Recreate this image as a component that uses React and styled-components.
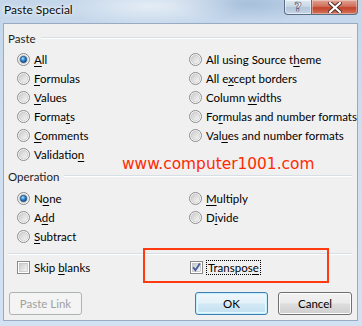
import React, { useId } from 'react';
import styled, { createGlobalStyle, css } from 'styled-components';

const uiFont = `Lato, "Noto Sans", "Liberation Sans", sans-serif`;

const GlobalStyle = createGlobalStyle`
  html, body {
    margin: 0;
    padding: 0;
    background: #fff;
  }
  body {
    font-family: ${uiFont};
    font-size: 11.5px;
    color: #000;
  }
`;

const Window = styled.div`
  position: relative;
  width: 362px;
  height: 326px;
  box-sizing: border-box;
  display: flex;
  flex-direction: column;
  overflow: hidden;
  background:
    radial-gradient(ellipse 90px 20px at 150px 6px, rgba(255,255,255,0.55), rgba(255,255,255,0) 100%),
    radial-gradient(ellipse 80px 18px at 250px 4px, rgba(140,170,205,0.5), rgba(140,170,205,0) 100%),
    linear-gradient(180deg, #c3d6ea 0%, #cfdff0 40%, #d3e2f2 100%);
`;

const TitleBar = styled.div`
  height: 23px;
  flex: none;
  display: flex;
  justify-content: space-between;
  align-items: flex-start;
  padding-left: 4px;
`;

const Title = styled.div`
  font-family: ${uiFont};
  font-size: 12px;
  line-height: 16px;
  padding-top: 2px;
  color: #0b0b0b;
  text-shadow: 0 0 6px #fff, 0 0 3px #fff;
`;

const CaptionButtons = styled.div`
  display: flex;
  margin-right: 4px;
`;

const CaptionButton = styled.div`
  height: 15px;
  box-sizing: border-box;
  display: flex;
  align-items: center;
  justify-content: center;
  border: 1px solid #5a6e86;
  border-top: none;
  ${p => p.$close ? css`
    width: 46px;
    border-left: none;
    border-radius: 0 0 4px 0;
    background: linear-gradient(180deg, #e0a394 0%, #d2705c 45%, #c2432a 55%, #d5735c 100%);
    box-shadow: inset 0 0 0 1px rgba(255,255,255,0.35);
  ` : css`
    width: 28px;
    border-radius: 0 0 0 4px;
    background: linear-gradient(180deg, #dfe8f2 0%, #c9d7e6 45%, #b3c5da 55%, #c6d6e7 100%);
    box-shadow: inset 0 0 0 1px rgba(255,255,255,0.5);
  `}
`;

const HelpGlyph = styled.span`
  font-family: "DejaVu Sans", sans-serif;
  font-weight: bold;
  font-size: 13px;
  line-height: 13px;
  color: #fff;
  -webkit-text-stroke: 0.6px #3e4f66;
  margin-top: -1px;
`;

const Body = styled.div`
  position: relative;
  flex: 1;
  margin: 0 4px 5px 3px;
  border: 1px solid #98abc2;
  background: #f0f0f0;
  padding: 6px 5px 4px 4px;
  display: flex;
  flex-direction: column;
`;

const GroupHeader = styled.div`
  display: flex;
  align-items: center;
  height: 16px;
  gap: 5px;
  margin-top: ${p => p.$top || 0}px;
  font-family: ${uiFont};
  font-size: 11.5px;
  color: #1e1e1e;
`;

const HeaderLine = styled.div`
  flex: 1;
  height: 0;
  border-top: 1px solid #d5dfe5;
  border-bottom: 1px solid #fff;
`;

const OptionGrid = styled.div`
  display: grid;
  grid-template-columns: 172px 1fr;
  grid-auto-flow: column;
  grid-template-rows: repeat(${p => p.$rows}, 19px);
  padding-left: 9px;
  margin-top: ${p => p.$top || 0}px;
`;

const Option = styled.label`
  display: flex;
  align-items: center;
  gap: 4px;
  height: 19px;
  font-family: ${uiFont};
  font-size: 11.5px;
  color: #000;
  white-space: nowrap;
`;

const Key = styled.span`
  text-decoration: underline;
  text-underline-offset: 2px;
  text-decoration-thickness: 1px;
`;

const Divider = styled.div`
  margin-top: 7px;
  border-top: 1px solid #d5dfe5;
  border-bottom: 1px solid #fff;
`;

const CheckRow = styled.div`
  display: grid;
  grid-template-columns: 173px 1fr;
  padding-left: 9px;
  margin-top: 3px;
  height: 19px;
`;

const FocusText = styled.span`
  outline: 1px dotted #000;
  outline-offset: 0px;
  padding: 0 1px;
`;

const ButtonRow = styled.div`
  display: flex;
  align-items: center;
  margin-top: 15px;
  padding-left: 1px;
  gap: 10px;
`;

const Spacer = styled.div`
  flex: 1;
`;

const Button = styled.button`
  width: ${p => p.$w || 73}px;
  height: 23px;
  box-sizing: border-box;
  padding: 0;
  font-family: ${uiFont};
  font-size: 11.5px;
  color: #000;
  border: 1px solid #707070;
  border-radius: 3px;
  background: linear-gradient(180deg, #f2f2f2 0%, #ebebeb 48%, #dddddd 52%, #cfcfcf 100%);
  box-shadow: inset 0 0 0 1px #fcfcfc;
  ${p => p.$default && css`
    border-color: #3c7fb1;
    box-shadow: inset 0 0 0 1px #c7eefb, inset 0 0 0 2px #e6f7fd;
    background: linear-gradient(180deg, #f0f7fb 0%, #e3f1f9 48%, #d2e8f5 52%, #c4e0f1 100%);
  `}
  ${p => p.disabled && css`
    border-color: #adb2b5;
    background: #f4f4f4;
    color: #a0a0a0;
    box-shadow: none;
  `}
`;

const Watermark = styled.div`
  position: absolute;
  left: 118px;
  top: 131px;
  font-family: "DejaVu Sans", Verdana, sans-serif;
  font-size: 15.4px;
  line-height: 18px;
  color: #ff2a00;
  white-space: nowrap;
`;

const Highlight = styled.div`
  position: absolute;
  left: 139px;
  top: 224px;
  width: 186px;
  height: 35px;
  box-sizing: border-box;
  border: 2px solid #ff3a10;
  pointer-events: none;
`;

const Radio = ({ checked }) => {
  const id = useId().replace(/:/g, '');
  return (
    <svg width="13" height="13" viewBox="0 0 13 13" style={{ flex: 'none' }}>
      <defs>
        <linearGradient id={`ro${id}`} x1="0" y1="0" x2="1" y2="1">
          <stop offset="0" stopColor="#f4f4f4" />
          <stop offset="1" stopColor="#ffffff" />
        </linearGradient>
        <linearGradient id={`ri${id}`} x1="0" y1="0" x2="1" y2="1">
          <stop offset="0" stopColor="#cbcbcb" />
          <stop offset="1" stopColor="#f8f8f8" />
        </linearGradient>
        <radialGradient id={`rc${id}`} cx="0.4" cy="0.35" r="0.7">
          <stop offset="0" stopColor="#b9e5ff" />
          <stop offset="0.45" stopColor="#2f8bd8" />
          <stop offset="1" stopColor="#0d3f78" />
        </radialGradient>
      </defs>
      <circle cx="6.5" cy="6.5" r="6" fill={`url(#ro${id})`} stroke="#8a8a8a" strokeWidth="1" />
      <circle cx="6.5" cy="6.5" r="4.3" fill={`url(#ri${id})`} stroke="#bcbcbc" strokeWidth="0.6" />
      {checked && (
        <circle cx="6.5" cy="6.5" r="3.2" fill={`url(#rc${id})`} stroke="#1b4a7a" strokeWidth="0.7" />
      )}
    </svg>
  );
};

const Checkbox = ({ checked }) => {
  const id = useId().replace(/:/g, '');
  return (
    <svg width="13" height="13" viewBox="0 0 13 13" style={{ flex: 'none' }}>
      <defs>
        <linearGradient id={`cb${id}`} x1="0" y1="0" x2="1" y2="1">
          <stop offset="0" stopColor={checked ? '#c4c9d0' : '#cbcbcb'} />
          <stop offset="1" stopColor="#f6f6f6" />
        </linearGradient>
      </defs>
      <rect x="0.5" y="0.5" width="12" height="12" fill="#fff" stroke="#8a8a8a" />
      <rect x="2.5" y="2.5" width="8" height="8" fill={`url(#cb${id})`} stroke="#b5b5b5" strokeWidth="0.6" />
      {checked && (
        <path d="M3.2 6.3 L5.4 9.2 L9.9 2.6" fill="none" stroke="#3f5a96" strokeWidth="1.7" />
      )}
    </svg>
  );
};

const CloseGlyph = () => (
  <svg width="14" height="11" viewBox="0 0 14 11">
    <path d="M2 1 L12 10 M12 1 L2 10" stroke="#4a2a24" strokeWidth="4" strokeLinecap="square" />
    <path d="M2 1 L12 10 M12 1 L2 10" stroke="#fff" strokeWidth="2.2" strokeLinecap="square" />
  </svg>
);

const pasteLeft = [
  { label: [<Key key="k">A</Key>, 'll'], checked: true },
  { label: [<Key key="k">F</Key>, 'ormulas'] },
  { label: [<Key key="k">V</Key>, 'alues'] },
  { label: ['Forma', <Key key="k">t</Key>, 's'] },
  { label: [<Key key="k">C</Key>, 'omments'] },
  { label: ['Validatio', <Key key="k">n</Key>] },
];

const pasteRight = [
  { label: ['All using Source t', <Key key="k">h</Key>, 'eme'] },
  { label: ['All e', <Key key="k">x</Key>, 'cept borders'] },
  { label: ['Column ', <Key key="k">w</Key>, 'idths'] },
  { label: ['Fo', <Key key="k">r</Key>, 'mulas and number formats'] },
  { label: ['Val', <Key key="k">u</Key>, 'es and number formats'] },
  { label: null },
];

const operationItems = [
  { label: ['N', <Key key="k">o</Key>, 'ne'], checked: true },
  { label: ['A', <Key key="k">d</Key>, 'd'] },
  { label: [<Key key="k">S</Key>, 'ubtract'] },
  { label: [<Key key="k">M</Key>, 'ultiply'] },
  { label: ['D', <Key key="k">i</Key>, 'vide'] },
  { label: null },
];

const renderOptions = items =>
  items.map((item, i) =>
    item.label ? (
      <Option key={i}>
        <Radio checked={item.checked} />
        <span>{item.label}</span>
      </Option>
    ) : (
      <div key={i} />
    )
  );

export default function App() {
  return (
    <>
      <GlobalStyle />
      <Window>
        <TitleBar>
          <Title>Paste Special</Title>
          <CaptionButtons>
            <CaptionButton>
              <HelpGlyph>?</HelpGlyph>
            </CaptionButton>
            <CaptionButton $close>
              <CloseGlyph />
            </CaptionButton>
          </CaptionButtons>
        </TitleBar>
        <Body>
          <GroupHeader>
            <span>Paste</span>
            <HeaderLine />
          </GroupHeader>
          <OptionGrid $rows={6} $top={4}>
            {renderOptions([...pasteLeft, ...pasteRight])}
          </OptionGrid>

          <GroupHeader $top={4}>
            <span>Operation</span>
            <HeaderLine />
          </GroupHeader>
          <OptionGrid $rows={3} $top={5}>
            {renderOptions(operationItems)}
          </OptionGrid>

          <Divider />
          <CheckRow>
            <Option>
              <Checkbox />
              <span>Skip <Key>b</Key>lanks</span>
            </Option>
            <Option>
              <Checkbox checked />
              <FocusText>Transpos<Key>e</Key></FocusText>
            </Option>
          </CheckRow>

          <ButtonRow>
            <Button disabled>Paste Link</Button>
            <Spacer />
            <Button $default>OK</Button>
            <Button $w={74}>Cancel</Button>
          </ButtonRow>

          <Watermark>www.computer1001.com</Watermark>
          <Highlight />
        </Body>
      </Window>
    </>
  );
}
